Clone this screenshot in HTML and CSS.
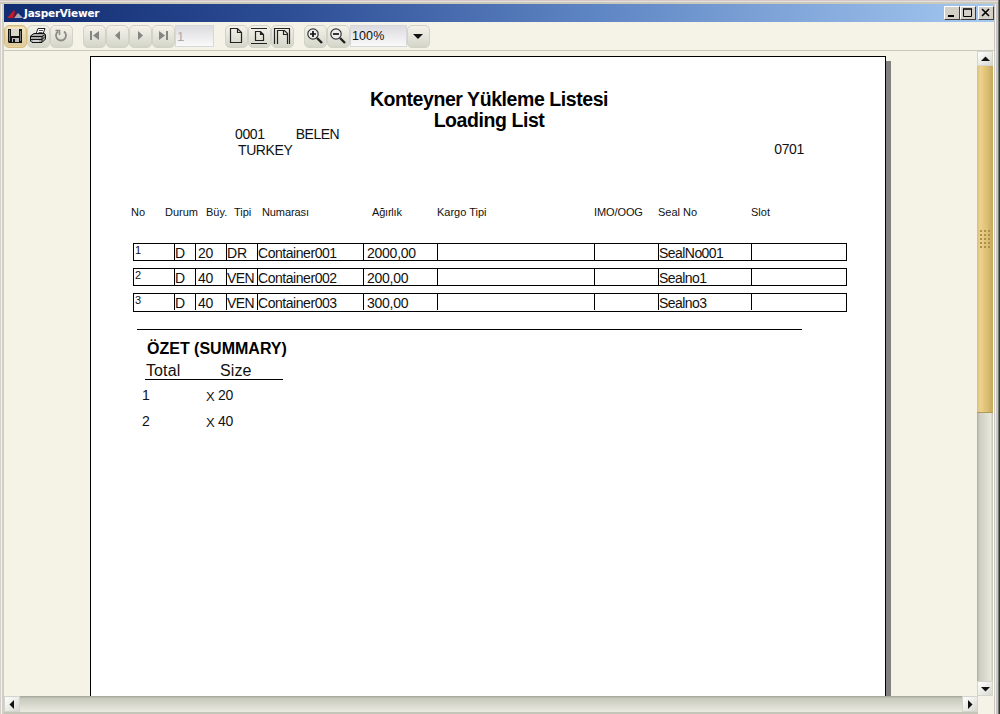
FILE: index.html
```html
<!DOCTYPE html>
<html lang="tr">
<head>
<meta charset="utf-8">
<title>JasperViewer</title>
<link rel="stylesheet" href="styles.css">
</head>
<body>
<div class="window">
  <header class="titlebar">
    <svg class="logo" width="18" height="11" viewBox="0 0 18 11"><path d="M0 10 7 2 12 10z" fill="#c01c30"/><path d="M6 10 8 3 11 10z" fill="#5c1838"/><path d="M7 10 11 5 16 10z" fill="#a5a8b4"/></svg>
    <span class="title">JasperViewer</span>
    <div class="win-btns">
      <span class="wb"><svg width="14" height="12"><path d="M3 9h6" stroke="#000" stroke-width="2"/></svg></span>
      <span class="wb"><svg width="14" height="12"><path d="M2.500 2v7.500h8V2M2 2h9" fill="none" stroke="#000"/><path d="M2 1.500h9v1H2z"/></svg></span>
      <span class="wb close"><svg width="14" height="12"><path d="M3 2l7 7M10 2l-7 7" stroke="#000" stroke-width="1.600"/></svg></span>
    </div>
  </header>
  <nav class="toolbar">
    <span class="tb hot"><svg width="22" height="22" viewBox="0 0 22 22"><path d="M4 4h14v14H5l-1-1z" fill="#111"/><path d="M7 4h8v7H7z" fill="#d9d6ca"/><path d="M5 5h1v11H5zM16 6h1v10h-1z" fill="#777"/><path d="M8 13h7v4H8z" fill="#bbb"/><path d="M9 14h2v3H9z" fill="#111"/></svg></span>
    <span class="tb"><svg width="22" height="22" viewBox="0 0 22 22"><path d="M8 9 10 3.500h7L15 9z" fill="#fff" stroke="#222"/><path d="M11 5.500h4M10.500 7.500h4" stroke="#555"/><path d="M2.500 11 6 8.500h10.500l1 1V14L14 17.500H4L2.500 16z" fill="#aaa" stroke="#111"/><path d="M3 11.500h11l3-2M3 14.500h11l3-3M14 11v6" stroke="#111" fill="none"/><path d="M5 16h6" stroke="#fff"/></svg></span>
    <span class="tb"><svg width="22" height="22" viewBox="0 0 22 22"><path d="M7 6.500A5 5 0 1 0 13 6.500" fill="none" stroke="#8b8b84" stroke-width="1.800"/><path d="M4.500 5.500H8.500v4.500" fill="none" stroke="#8b8b84" stroke-width="1.500"/></svg></span>
    <span class="tb gap1"><svg width="22" height="22" viewBox="0 0 22 22"><path d="M6 6h2v9H6zM15 6v9l-6-4.500z" fill="#858581"/></svg></span>
    <span class="tb"><svg width="22" height="22" viewBox="0 0 22 22"><path d="M13 6v9l-5-4.500z" fill="#858581"/></svg></span>
    <span class="tb"><svg width="22" height="22" viewBox="0 0 22 22"><path d="M8 6v9l5-4.500z" fill="#858581"/></svg></span>
    <span class="tb"><svg width="22" height="22" viewBox="0 0 22 22"><path d="M13 6h2v9h-2zM6 6v9l6-4.500z" fill="#858581"/></svg></span>
    <span class="field page-no">1</span>
    <span class="tb gap2"><svg width="22" height="22" viewBox="0 0 22 22"><path d="M4.500 3.500h7l4 4v10h-11zM11.500 3.500v4h4" fill="none" stroke="#222" stroke-width="1.200"/></svg></span>
    <span class="tb"><svg width="22" height="22" viewBox="0 0 22 22"><path d="M2 3.500h16M2 18.500h16M6.500 6.500h5l3 3v6h-8zM11.500 6.500v3h3" fill="none" stroke="#222" stroke-width="1.200"/></svg></span>
    <span class="tb"><svg width="22" height="22" viewBox="0 0 22 22"><path d="M2.500 19V3.500h15V19M5.500 19V5.500h7l3 3V19M11.500 5.500v4h4" fill="none" stroke="#222" stroke-width="1.200"/></svg></span>
    <span class="tb gap3"><svg width="22" height="22" viewBox="0 0 22 22"><circle cx="8" cy="9" r="5.200" fill="#eee" stroke="#333" stroke-width="1.200"/><path d="M5 9h6M8 6v6" stroke="#111" stroke-width="1.700"/><path d="m12 13 5 5" stroke="#222" stroke-width="2.400"/></svg></span>
    <span class="tb"><svg width="22" height="22" viewBox="0 0 22 22"><circle cx="8" cy="9" r="5.200" fill="#eee" stroke="#333" stroke-width="1.200"/><path d="M5 9h6" stroke="#111" stroke-width="1.700"/><path d="m12 13 5 5" stroke="#222" stroke-width="2.400"/></svg></span>
    <span class="field zoom">100%</span>
    <span class="tb"><svg width="22" height="22" viewBox="0 0 22 22"><path d="M5 9h10l-5 5z" fill="#111"/></svg></span>
  </nav>
  <div class="middle">
    <main class="viewport">
      <div class="paper">
        <h1>Konteyner Yükleme Listesi<br>Loading List</h1>
        <div class="origin">
          <div class="port"><span class="code">0001</span><span class="belen">BELEN</span></div>
          <div class="land"><span class="turkey">TURKEY</span><span class="code">0701</span></div>
        </div>
        <div class="heads">
          <span>No</span><span>Durum</span><span>Büy.</span><span>Tipi</span><span class="tight">Numarası</span><span class="tight2">Ağırlık</span><span>Kargo Tipi</span><span class="tight">IMO/OOG</span><span>Seal No</span><span>Slot</span>
        </div>
        <div class="row"><span class="n">1</span><span>D</span><span class="sz">20</span><span>DR</span><span class="cn">Container001</span><span class="wt">2000,00</span><span></span><span></span><span class="seal">SealNo001</span><span></span></div>
        <div class="row"><span class="n">2</span><span>D</span><span class="sz">40</span><span class="ven">VEN</span><span class="cn">Container002</span><span class="wt">200,00</span><span></span><span></span><span class="seal">Sealno1</span><span></span></div>
        <div class="row last"><span class="n">3</span><span>D</span><span class="sz">40</span><span class="ven">VEN</span><span class="cn">Container003</span><span class="wt">300,00</span><span></span><span></span><span class="seal">Sealno3</span><span></span></div>
        <section class="summary">
          <h2>ÖZET (SUMMARY)</h2>
          <div class="sum-head"><span>Total</span><span>Size</span></div>
          <div class="sum-row"><span>1</span><span class="x">X</span><span>20</span></div>
          <div class="sum-row"><span>2</span><span class="x">X</span><span>40</span></div>
        </section>
      </div>
      <div class="shadow"></div>
    </main>
    <aside class="vscroll">
      <span class="sb"><svg width="16" height="15"><path d="M4 10h9L8.500 5.500z" fill="#111"/></svg></span>
      <div class="thumb"><i class="grip"></i></div>
      <div class="track"></div>
      <span class="sb"><svg width="16" height="15"><path d="M4 6h9l-4.500 4.500z" fill="#111"/></svg></span>
    </aside>
  </div>
  <footer class="hscroll">
    <span class="sb"><svg width="15" height="15"><path d="M10 4v9L5.500 8.500z" fill="#111"/></svg></span>
    <div class="htrack"></div>
    <span class="sb"><svg width="15" height="15"><path d="M6 4v9l4.500-4.500z" fill="#111"/></svg></span>
  </footer>
</div>
</body>
</html>
```
FILE: styles.css
```css
* { box-sizing: border-box; }
body { margin: 0; width: 1000px; height: 714px; overflow: hidden; background: #d4d0c8; font-family: "Liberation Sans", Arial, sans-serif; color: #111; }
svg { display: block; }
.window {
  width: 1000px; height: 714px; display: flex; flex-direction: column;
  padding: 4px 6px 0 4px;
  background:
    linear-gradient(#d6c8c8 0 1px, #e4dfda 1px 2px, #c9cabc 2px 4px, transparent 4px) 0 0 / 998px 4px no-repeat,
    linear-gradient(90deg, #d8cfcc 0 1px, #f4f2ee 1px 2px, #d0cfc4 2px 4px, #f5f3e8 4px 994px, #c9c7bf 994px 995px, #f4f2ee 995px 996px, #c9c6c3 996px 998px, #777 998px 999px, #2d3a25 999px);
}
.titlebar { height: 18px; flex: none; display: flex; align-items: center; background: linear-gradient(90deg, #112c70, #2c4c94 28%, #5f86c4 60%, #a4c8f0); padding: 0 0 0 3px; }
.title { font: bold 10.5px/18px "DejaVu Sans", sans-serif; letter-spacing: -0.2px; color: #fff; flex: 1; margin-left: -1px; }
.win-btns { display: flex; }
.wb { width: 16px; height: 14px; background: #d4d0c8; border: 1px solid; border-color: #fff #404040 #404040 #fff; }
.close { margin-left: 2px; }
.toolbar { height: 29px; flex: none; display: flex; align-items: center; background: #f5f3e8; border-bottom: 1px solid #c9c8bc; }
.tb { width: 23px; height: 23px; flex: none; border-radius: 5px; border: 1px solid #d2d2c6; background: linear-gradient(#f4f3ea, #d5d6ca); }
.tb svg { margin: -1px 0 0; }
.hot { border-color: #d6bc7c; background: linear-gradient(#f3e8c7, #dcc798); box-shadow: inset 0 0 0 1px #e6d3a0; }
.gap1, .gap3 { margin-left: 10px; }
.gap2 { margin-left: 11px; }
.hot svg { margin-left: -1px; }
.field { height: 22px; border: 1px solid #d8d8dc; background: linear-gradient(#dcdce0, #fafafa); font-size: 13px; line-height: 21px; }
.page-no { width: 39px; color: #a9a9a9; padding-left: 1px; }
.zoom { width: 57px; padding-left: 1px; font-size: 12.5px; line-height: 21px; letter-spacing: 0.1px; }
.middle { height: 645px; flex: none; display: flex; }
.viewport { width: 973px; display: flex; padding: 5px 0 0 86px; background: #f5f3e6; overflow: hidden; }
.paper { width: 796px; height: 700px; flex: none; background: #fff; border: 1px solid #000; padding: 32px 0 0; }
.shadow { width: 5px; height: 700px; background: #808080; margin-top: 5px; }
h1 { margin: 0; padding-left: 2px; font-size: 19.5px; line-height: 21px; letter-spacing: -0.43px; font-weight: bold; text-align: center; color: #000; }
.origin { font-size: 14px; line-height: 16px; margin-top: -5px; }
.code { letter-spacing: -0.35px; }
.port { padding-left: 144px; display: flex; gap: 31px; }
.land { padding: 0 81px 0 147px; display: flex; justify-content: space-between; line-height: 17px; }
.land .code { line-height: 15px; }
.belen { letter-spacing: -0.5px; }
.turkey { letter-spacing: -0.4px; }
.heads { display: grid; grid-template-columns: 34px 41px 28px 28px 110px 65px 157px 64px 93px 90px; padding-left: 40px; margin-top: 47px; font-size: 11px; line-height: 13px; white-space: nowrap; }
.tight { letter-spacing: -0.1px; }
.tight2 { letter-spacing: -0.2px; }
.row { width: 714px; height: 18px; margin: 7px 0 0 42px; display: grid; grid-template-columns: 40px 21px 31px 31px 106px 74px 157px 64px 93px 94px; border: 1px solid #000; font-size: 14px; line-height: 19px; white-space: nowrap; }
.heads + .row { margin-top: 24px; }
.row span { height: 16px; border-left: 1px solid #000; }
.row .n { border-left: 0; font-size: 11px; line-height: 12px; padding-left: 1px; }
.row .sz { padding-left: 2px; letter-spacing: -0.4px; }
.row .cn { letter-spacing: -0.45px; }
.row .wt { padding-left: 3px; letter-spacing: -0.25px; }
.row .ven { letter-spacing: -0.6px; }
.row .seal { letter-spacing: -0.55px; }
.last { height: 19px; }
.summary { margin: 17px 0 0 46px; width: 665px; border-top: 1px solid #000; padding-top: 10px; }
h2 { margin: 0 0 0 10px; font-size: 16px; line-height: 18px; color: #000; }
.sum-head { width: 138px; margin-left: 8px; padding-left: 1px; height: 22px; border-bottom: 1px solid #000; display: grid; grid-template-columns: 74px 60px; font-size: 16px; line-height: 25px; letter-spacing: 0.1px; }
.sum-row { height: 16px; margin: 7px 0 10px 5px; display: grid; grid-template-columns: 64px 12px 40px; font-size: 14px; line-height: 16px; letter-spacing: -0.4px; }
.x { font-size: 13px; line-height: 20px; }
.vscroll { width: 17px; display: flex; flex-direction: column; border-right: 1px solid #fff; }
.sb { width: 16px; height: 15px; flex: none; background: linear-gradient(135deg, #fff, #d8d8d2); border: 1px solid #d4d4cc; }
.sb svg { margin: -1px; }
.thumb { height: 347px; flex: none; background: linear-gradient(90deg, #dfc27c 0 1px, #ecd394 3px, #e6c878 7px, #d9bb75 11px, #c9ac58 15px); border-bottom: 1px solid #b19a5c; display: flex; align-items: center; justify-content: center; }
.grip { width: 12px; height: 20px; background: radial-gradient(circle at 2px 2px, #a98d4c 0 .7px, transparent 1.1px) 0 0 / 4px 4px; }
.track { flex: 1; background: linear-gradient(90deg, #b4b5a9 0 1px, #cccdc0 2px, #e8e8de 14px, #c8c8be 15px); }
.hscroll { height: 18px; flex: none; display: flex; border-bottom: 2px solid #c5c6ba; width: 974px; }
.hscroll .sb { height: 16px; }
.htrack { flex: 1; background: linear-gradient(#a9aaa0 0 1px, #c6c8bb 2px, #e8e8de 15px); }
.sum-row + .sum-row { margin-top: 10px; }
```
